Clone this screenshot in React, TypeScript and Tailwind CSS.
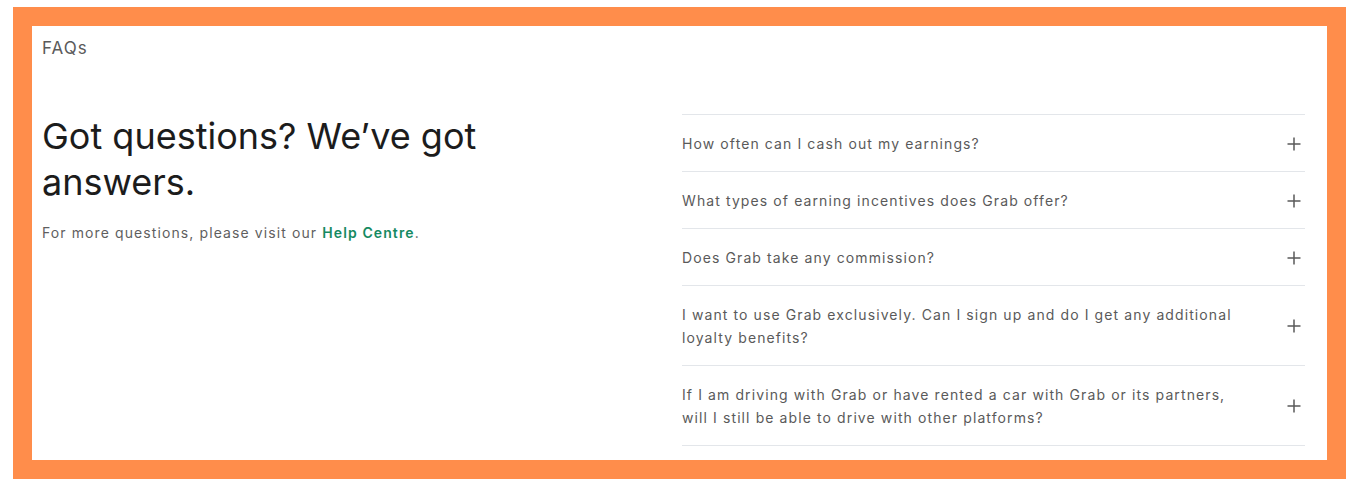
import React from "react";

const questions = [
  "How often can I cash out my earnings?",
  "What types of earning incentives does Grab offer?",
  "Does Grab take any commission?",
  "I want to use Grab exclusively. Can I sign up and do I get any additional loyalty benefits?",
  "If I am driving with Grab or have rented a car with Grab or its partners, will I still be able to drive with other platforms?",
];

function Plus() {
  return (
    <svg width="14" height="14" viewBox="0 0 14 14" fill="none" stroke="#5a5a5a" strokeWidth="1.5">
      <path d="M7 0.5V13.5M0.5 7H13.5" />
    </svg>
  );
}

export default function App() {
  return (
    <div className="w-[1370px] h-[495px] bg-white pt-[7px] pl-[13px]" style={{ fontFamily: "Inter, 'Noto Sans', sans-serif" }}>
      <div className="w-[1333px] h-[472px] border-[19px] border-[#ff8d4b] bg-white pl-[10px] pr-[22px]">
        <div className="pt-[12px] text-[17px] leading-[20px] tracking-[1px] text-[#5a5a5a]">FAQs</div>
        <div className="flex mt-[55px]">
          <div className="w-[640px]">
            <h1 className="text-[36px] leading-[46px] text-[#1c1c1c] w-[470px] font-normal">
              Got questions? We’ve got answers.
            </h1>
            <p className="mt-[18px] text-[14px] leading-[20px] tracking-[1.1px] text-[#5f5f5f]">
              For more questions, please visit our <span className="font-semibold text-[#158a62]">Help Centre</span>.
            </p>
          </div>
          <div className="flex-1 border-t border-[#e3e6ea] mt-[1px]">
            {questions.map((q) => (
              <div key={q} className="flex items-center justify-between border-b border-[#e3e6ea] pt-[17px] pb-[16px]">
                <span className="w-[560px] text-[14px] leading-[23px] tracking-[1.1px] text-[#5a5a5a]">{q}</span>
                <span className="mr-[4px]"><Plus /></span>
              </div>
            ))}
          </div>
        </div>
      </div>
    </div>
  );
}
